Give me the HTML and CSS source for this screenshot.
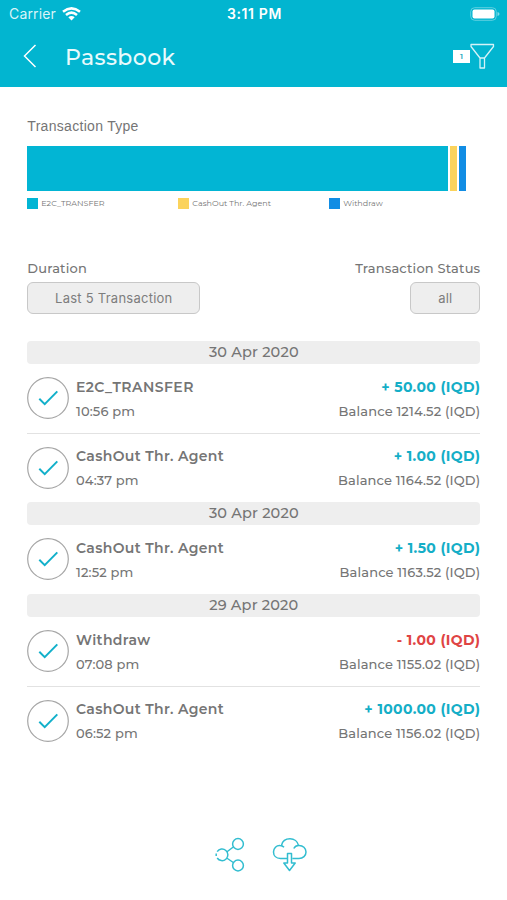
FILE: index.html
```html
<!DOCTYPE html>
<html lang="en">
<head>
<meta charset="utf-8">
<title>Passbook</title>
<link rel="stylesheet" href="styles.css">
</head>
<body>
<svg width="0" height="0" class="defs"><defs>
<symbol id="tick" viewBox="0 0 42 42"><circle cx="21" cy="21" r="20.3" fill="#fff" stroke="#a6a6a6" stroke-width="1.2"/><path d="M12.300 21.700l5.400 5.400L30.300 14.400" fill="none" stroke="#12b0ca" stroke-width="2"/></symbol>
</defs></svg>
<header class="top">
  <div class="status">
    <div class="carrier">Carrier
      <svg class="wifi" width="19" height="14" viewBox="0 0 19 14"><path d="M1 4.700Q9.500-2 18 4.700M4 8Q9.500 3.200 15 8" fill="none" stroke="#fff" stroke-width="2.500"/><path d="M6.300 10.300Q9.500 7.600 12.700 10.300L9.500 13.500z" fill="#fff"/></svg>
    </div>
    <div class="clock">3:11 PM</div>
    <svg class="battery" width="30" height="14" viewBox="0 0 30 14"><rect x=".7" y=".7" width="25.600" height="12.600" rx="4" fill="none" stroke="#5fd0e0" stroke-width="1"/><rect x="2.500" y="2.500" width="22" height="9" rx="2" fill="#fff"/><path d="M27.500 5v4q2-.5 2-2t-2-2z" fill="#7fdbe8"/></svg>
  </div>
  <div class="nav">
    <svg class="back" width="14" height="24" viewBox="0 0 14 24"><path d="M12.500 1L1.500 12l11 11" fill="none" stroke="#fff" stroke-width="1.500"/></svg>
    <h1>Passbook</h1>
    <span class="count">1</span>
    <svg class="funnel" width="25" height="27" viewBox="0 0 25 27"><path d="M1 1.500h22.500v2l-9 11.500v10h-4.500V15L1 3.500zM10 15h4.500" fill="none" stroke="#d5f3f8" stroke-width="1.300" stroke-linejoin="round"/></svg>
  </div>
</header>
<main>
  <h2>Transaction Type</h2>
  <div class="chart"><i class="cyan"></i><i class="yellow"></i><i class="blue"></i></div>
  <div class="legend">
    <div><i class="cyan"></i><span>E2C_TRANSFER</span></div>
    <div><i class="yellow"></i><span>CashOut Thr. Agent</span></div>
    <div><i class="blue"></i><span>Withdraw</span></div>
  </div>
  <div class="filters">
    <div><label>Duration</label><button class="wide">Last 5 Transaction</button></div>
    <div class="right"><label>Transaction Status</label><button class="small">all</button></div>
  </div>
  <section>
    <h3>30 Apr 2020</h3>
    <article><svg class="tick"><use href="#tick"/></svg><div><b class="caps">E2C_TRANSFER</b><span>10:56 pm</span></div><div class="sum"><strong>+ 50.00 (IQD)</strong><span>Balance 1214.52 (IQD)</span></div></article>
    <article><svg class="tick"><use href="#tick"/></svg><div><b>CashOut Thr. Agent</b><span>04:37 pm</span></div><div class="sum"><strong>+ 1.00 (IQD)</strong><span>Balance 1164.52 (IQD)</span></div></article>
    <h3>30 Apr 2020</h3>
    <article><svg class="tick"><use href="#tick"/></svg><div><b>CashOut Thr. Agent</b><span>12:52 pm</span></div><div class="sum"><strong>+ 1.50 (IQD)</strong><span>Balance 1163.52 (IQD)</span></div></article>
    <h3>29 Apr 2020</h3>
    <article><svg class="tick"><use href="#tick"/></svg><div><b>Withdraw</b><span>07:08 pm</span></div><div class="sum"><strong class="minus">- 1.00 (IQD)</strong><span>Balance 1155.02 (IQD)</span></div></article>
    <article><svg class="tick"><use href="#tick"/></svg><div><b>CashOut Thr. Agent</b><span>06:52 pm</span></div><div class="sum"><strong>+ 1000.00 (IQD)</strong><span>Balance 1156.02 (IQD)</span></div></article>
  </section>
</main>
<footer>
  <svg width="30" height="36" viewBox="0 0 30 36" fill="none" stroke="#32bdd0" stroke-width="1.500"><circle cx="23" cy="7" r="5.400"/><circle cx="23" cy="28.500" r="5.400"/><path d="M2.200 14.700A5.800 5.800 0 1 1 2.200 21M1.200 16.500v2.500M11.700 15L18.300 10M11.700 21L18.300 25.500"/></svg>
  <svg width="36" height="36" viewBox="0 0 36 36" fill="none" stroke="#32bdd0" stroke-width="1.500" stroke-linejoin="round"><path d="M15 21.500H8.500C4 21.500 1.500 18.500 1.500 15c0-4 3-6.700 6.500-6.500 1.500 0 3 .6 4 1.800M9.500 8.300C10.500 4 14 1.800 18 1.800s7.700 2.500 8.500 6.700c4.500-.3 7.500 2.700 7.500 6.500s-3 6.500-7 6.500h-6.500M26.500 8.500c-2 0-3.700 1-4.700 3M15.500 16.500h4V26h3.700L17.500 33.500 11.800 26h3.700z"/></svg>
</footer>
</body>
</html>
```

FILE: styles.css
```css
* { box-sizing: border-box; }
body { margin: 0; width: 507px; height: 900px; display: flex; flex-direction: column; background: #fff; color: #757575; font-family: Montserrat, Inter, sans-serif; overflow: hidden; }
.defs { position: absolute; }
h1, h2, h3 { margin: 0; font-weight: 400; }
svg { display: block; flex: none; }
.top { height: 87px; background: #02b5d0; color: #fff; flex: none; }
.status { height: 27px; display: grid; grid-template-columns: 1fr auto 1fr; align-items: center; padding: 0 7px 0 9px; font: 14px/27px Inter, sans-serif; }
.carrier { display: flex; gap: 6px; align-items: center; color: #d9f4f8; letter-spacing: .15px; }
.clock { font-weight: 600; letter-spacing: .65px; }
.battery { justify-self: end; }
.nav { height: 60px; display: flex; align-items: center; padding: 0 12px 0 23px; }
.nav svg, .count { margin-top: -2px; }
h1 { font-size: 22px; font-weight: 500; letter-spacing: .4px; margin-left: 28px; flex: 1; color: #e9fafc; }
.count { width: 17px; height: 13px; background: #fff; color: #28a9bd; font-size: 8px; line-height: 13px; font-weight: 600; text-align: center; }
main { padding: 0 26.700px 0 27.300px; }
h2 { margin-top: 28.500px; font: 14px/20px "Liberation Sans", sans-serif; letter-spacing: .3px; }
.chart { margin-top: 10.700px; height: 45.300px; display: flex; gap: 2px; }
.chart i:nth-child(1) { width: 420.500px; }
.chart .yellow { width: 7px; }
.chart .blue { width: 7px; }
.cyan { background: #02b5d4; }
.yellow { background: #fbd35c; }
.blue { background: #118de4; }
.legend { display: grid; grid-template-columns: 151px 151px 1fr; height: 11px; margin-top: 6.500px; font-size: 8px; }
.legend div { display: flex; align-items: center; gap: 3px; }
.legend i { width: 11px; height: 11px; }
.filters { margin-top: 49px; display: flex; justify-content: space-between; }
.filters > div { display: flex; flex-direction: column; }
.right { align-items: flex-end; }
label { font-size: 13px; font-weight: 500; line-height: 20px; height: 24px; letter-spacing: .18px; }
button { height: 32px; padding: 1px 0 0; border: 1px solid #c8c8c8; border-radius: 6px; background: #eee; color: #7d7d7d; font: 13px Inter, sans-serif; letter-spacing: .25px; }
.wide { width: 173px; }
.small { width: 70px; }
section { margin-top: 27px; }
h3 { height: 23px; border-radius: 4px; background: #eee; text-align: center; font-size: 14.500px; font-weight: 500; line-height: 23px; letter-spacing: .15px; }
article { height: 69px; display: flex; padding-top: 13px; }
article + article { border-top: 1px solid #e2e2e2; padding-top: 12px; }
article + article .tick { margin-top: .6px; }
.tick { width: 42px; height: 42px; }
article div { margin-left: 6.700px; margin-top: -2px; display: flex; flex-direction: column; }
article b, article strong { font-size: 14px; line-height: 24px; font-weight: 600; letter-spacing: .35px; }
article .caps { letter-spacing: .45px; }
article span { font-size: 13px; font-weight: 500; line-height: 24px; letter-spacing: .15px; }
article .sum { margin-left: auto; align-items: flex-end; }
strong { color: #14aec7; }
article strong { font-weight: 700; }
article strong.minus { color: #df4444; }
footer { margin-top: auto; height: 63.500px; display: flex; justify-content: center; gap: 27px; margin-right: -15.500px; }
```
